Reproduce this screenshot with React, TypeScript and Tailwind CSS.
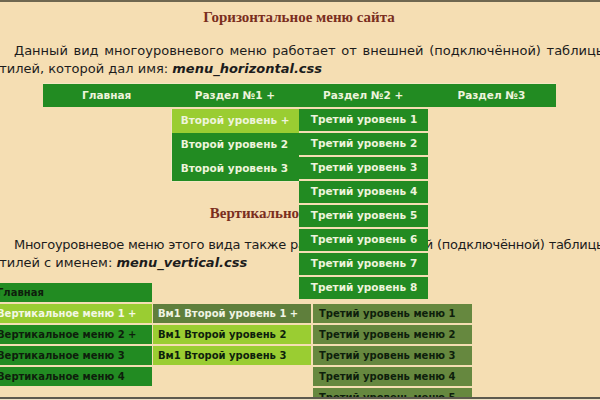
import React from 'react'

const TOP = ['Главная', 'Раздел №1 +', 'Раздел №2 +', 'Раздел №3']
const SECOND = ['Второй уровень +', 'Второй уровень 2', 'Второй уровень 3']
const THIRD = [1, 2, 3, 4, 5, 6, 7, 8].map(n => `Третий уровень ${n}`)

const VMAIN = ['Главная', 'Вертикальное меню 1 +', 'Вертикальное меню 2 +', 'Вертикальное меню 3', 'Вертикальное меню 4']
const VSECOND = ['Вм1 Второй уровень 1 +', 'Вм1 Второй уровень 2', 'Вм1 Второй уровень 3']
const VTHIRD = [1, 2, 3, 4, 5].map(n => `Третий уровень меню ${n}`)

function HorizontalMenu() {
  return (
    <div className="relative mx-auto w-[513px] h-[24px] flex bg-[#228b22] border-t border-[#f3e7c4]">
      {TOP.map((t, i) => (
        <div key={t} className="relative w-1/4 flex items-center justify-center text-[10.5px] font-bold text-[#eef4dc]">
          {t}
          {i === 1 && (
            <div className="absolute left-0 top-[25px] w-[128px] border-l border-b border-[#f3e7c4] z-10">
              {SECOND.map((s, j) => (
                <div
                  key={s}
                  className={`relative h-[24px] flex items-center pl-[9px] ${j === 0 ? 'bg-[#9acd32]' : 'bg-[#228b22]'}`}
                >
                  {s}
                  {j === 0 && (
                    <div className="absolute left-[127px] top-0 w-[129px] flex flex-col gap-[2px]">
                      {THIRD.map(th => (
                        <div key={th} className="h-[22px] flex items-center pl-[12px] bg-[#228b22] text-[#eef4dc]">
                          {th}
                        </div>
                      ))}
                    </div>
                  )}
                </div>
              ))}
            </div>
          )}
        </div>
      ))}
    </div>
  )
}

function VerticalMenu() {
  return (
    <div className="relative w-[160px] flex flex-col gap-[2px] text-[10px] font-bold">
      {VMAIN.map((t, i) => (
        <div
          key={t}
          className={`relative h-[19px] flex items-center pl-[5px] ${
            i === 1 ? 'bg-[#9acd32] text-[#f4f7e6]' : 'bg-[#228b22] text-[#0e1f0c]'
          }`}
        >
          {t}
          {i === 1 && (
            <div className="absolute left-[161px] top-0 w-[158px] flex flex-col gap-[2px]">
              {VSECOND.map((s, j) => (
                <div
                  key={s}
                  className={`relative h-[19px] flex items-center pl-[5px] ${
                    j === 0 ? 'bg-[#5f7f3c] text-[#f1f4e4]' : 'bg-[#9acd32] text-[#0e1f0c]'
                  }`}
                >
                  {s}
                  {j === 0 && (
                    <div className="absolute left-[160px] top-0 w-[159px] flex flex-col gap-[2px]">
                      {VTHIRD.map(th => (
                        <div key={th} className="h-[19px] flex items-center pl-[6px] bg-[#66883f] text-[#0e1f0c]">
                          {th}
                        </div>
                      ))}
                    </div>
                  )}
                </div>
              ))}
            </div>
          )}
        </div>
      ))}
    </div>
  )
}

export default function App() {
  return (
    <div className="w-[600px] h-[400px] overflow-hidden bg-[#f5deb3] flex flex-col font-['DejaVu_Sans',sans-serif]">
      <div className="h-[2px] bg-[#6f6750]" />
      <div className="h-[395px] overflow-hidden">
        <div className="ml-[-8px] w-[614px]">
          {/* Горизонтальное */}
          <h2 className="mt-[5px] text-center font-['Liberation_Serif',serif] font-bold text-[15px] leading-[20px] text-[#7a2e1e]">
            Горизонтальное меню сайта
          </h2>
          <p className="mt-[15px] text-[13px] leading-[18px] text-[#1c1c1c] text-justify indent-[22px]">
            Данный вид многоуровневого меню работает от внешней (подключённой) таблицы стилей, которой дал имя:{' '}
            <b><i>menu_horizontal.css</i></b>
          </p>
          <div className="mt-[5px]">
            <HorizontalMenu />
          </div>

          {/* Вертикальное */}
          <h2 className="mt-[96px] text-center font-['Liberation_Serif',serif] font-bold text-[15px] leading-[20px] text-[#7a2e1e]">
            Вертикальное меню сайта
          </h2>
          <div className="mt-[13px] text-[13px] leading-[18px] text-[#1c1c1c]">
            <p className="indent-[22px] whitespace-nowrap tracking-[-0.3px] [word-spacing:-2px] text-justify [text-align-last:justify]">
              Многоуровневое меню этого вида также работает от внешней (подключённой) таблицы
            </p>
            <p>
              стилей с именем: <b><i>menu_vertical.css</i></b>
            </p>
          </div>
          <div className="mt-[11px]">
            <VerticalMenu />
          </div>
        </div>
      </div>
      <div className="h-[2px] bg-[#5d5a4e]" />
      <div className="flex-1 bg-[#ece0c4]" />
    </div>
  )
}
